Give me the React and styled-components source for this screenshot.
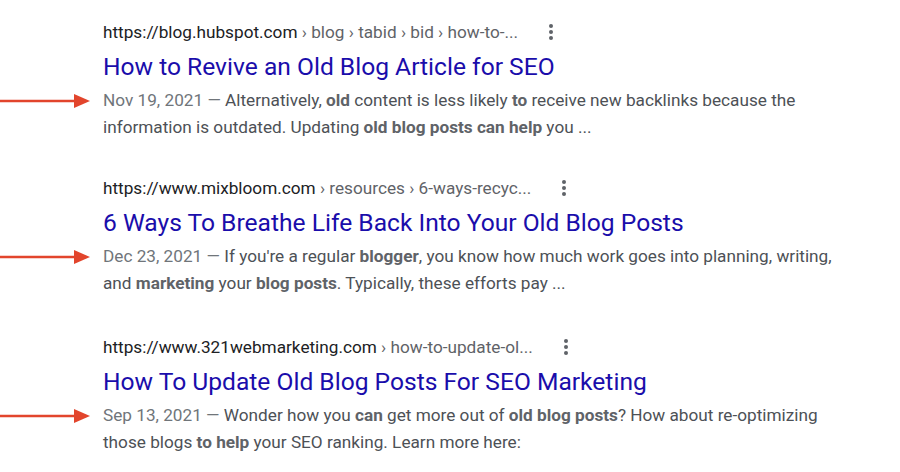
import React from "react";
import styled, { createGlobalStyle } from "styled-components";

const GlobalStyle = createGlobalStyle`
  html, body {
    margin: 0;
    padding: 0;
    background: #fff;
  }
  body {
    font-family: Roboto, "Liberation Sans", Arial, sans-serif;
  }
`;

const Page = styled.div`
  width: 900px;
  height: 472px;
  overflow: hidden;
  padding-top: 20px;
  box-sizing: border-box;
  display: flex;
  flex-direction: column;
  gap: 35px;
`;

const Result = styled.div`
  display: grid;
  grid-template-columns: 103px 1fr;
  grid-template-rows: auto auto auto;
  margin-top: ${(p) => p.offset || 0}px;
`;

const UrlRow = styled.div`
  grid-column: 2;
  display: flex;
  align-items: center;
  height: 24px;
  font-size: 17.2px;
  color: #202124;
  white-space: pre;
`;

const Crumbs = styled.span`
  color: #5f6368;
`;

const Kebab = styled.span`
  display: inline-flex;
  flex-direction: column;
  gap: 2px;
  margin-left: ${(p) => p.gap}px;

  i {
    width: 4px;
    height: 4px;
    border-radius: 50%;
    background: #5f6368;
  }
`;

const Title = styled.a`
  grid-column: 2;
  margin-top: 6px;
  font-size: 24.6px;
  line-height: 34px;
  color: #1a0dab;
  text-decoration: none;
  white-space: nowrap;
`;

const ArrowCell = styled.div`
  grid-column: 1;
  grid-row: 3;
  margin-top: 3px;
  height: 27px;
  display: flex;
  align-items: center;
`;

const Snippet = styled.p`
  grid-column: 2;
  grid-row: 3;
  margin: 3px 0 0;
  font-size: 17.2px;
  line-height: 27px;
  color: #4d5156;
  max-width: 745px;

  b {
    font-weight: 700;
    color: #5f6368;
  }
`;

const DateText = styled.span`
  color: #70757a;
`;

const Arrow = () => (
  <svg width="92" height="16" viewBox="0 0 92 16">
    <line x1="0" y1="8" x2="76" y2="8" stroke="#e2452c" strokeWidth="2.5" />
    <polygon points="74,1 90,8 74,15" fill="#e2452c" />
  </svg>
);

const results = [
  {
    domain: "https://blog.hubspot.com",
    crumbs: " › blog › tabid › bid › how-to-...",
    kebabGap: 31,
    offset: 0,
    title: "How to Revive an Old Blog Article for SEO",
    date: "Nov 19, 2021",
    body: (
      <>
        Alternatively, <b>old</b> content is less likely <b>to</b> receive new
        backlinks because the information is outdated. Updating{" "}
        <b>old blog posts can help</b> you ...
      </>
    ),
  },
  {
    domain: "https://www.mixbloom.com",
    crumbs: " › resources › 6-ways-recyc...",
    kebabGap: 31,
    offset: 0,
    title: "6 Ways To Breathe Life Back Into Your Old Blog Posts",
    date: "Dec 23, 2021",
    body: (
      <>
        If you're a regular <b>blogger</b>, you know how much work goes into
        planning, writing, and <b>marketing</b> your <b>blog posts</b>.
        Typically, these efforts pay ...
      </>
    ),
  },
  {
    domain: "https://www.321webmarketing.com",
    crumbs: " › how-to-update-ol...",
    kebabGap: 31,
    offset: 3,
    title: "How To Update Old Blog Posts For SEO Marketing",
    date: "Sep 13, 2021",
    body: (
      <>
        Wonder how you <b>can</b> get more out of <b>old blog posts</b>? How
        about re-optimizing those blogs <b>to help</b> your SEO ranking. Learn
        more here:
      </>
    ),
  },
];

export default function App() {
  return (
    <>
      <GlobalStyle />
      <Page>
        {results.map((r) => (
          <Result key={r.title} offset={r.offset}>
            <UrlRow>
              <span>
                {r.domain}
                <Crumbs>{r.crumbs}</Crumbs>
              </span>
              <Kebab gap={r.kebabGap}>
                <i />
                <i />
                <i />
              </Kebab>
            </UrlRow>
            <Title href="#">{r.title}</Title>
            <ArrowCell>
              <Arrow />
            </ArrowCell>
            <Snippet>
              <DateText>{r.date} — </DateText>
              {r.body}
            </Snippet>
          </Result>
        ))}
      </Page>
    </>
  );
}
